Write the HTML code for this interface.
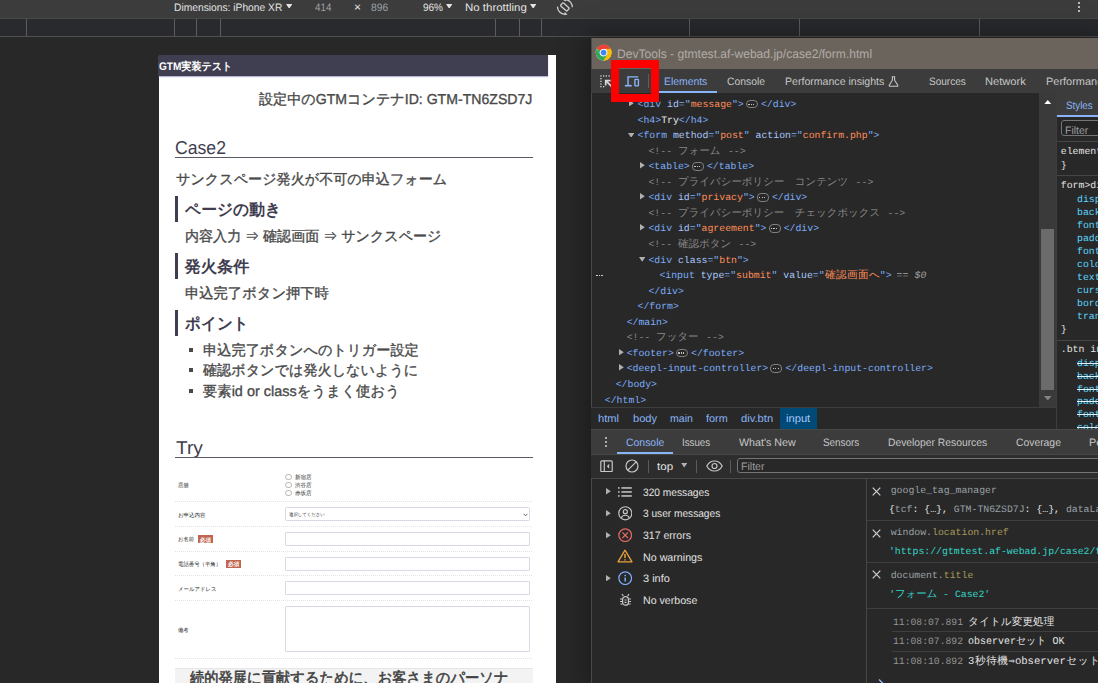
<!DOCTYPE html>
<html lang="ja"><head><meta charset="utf-8"><title>DevTools - gtmtest.af-webad.jp/case2/form.html</title>
<style>
html,body{margin:0;padding:0}
body{width:1098px;height:683px;overflow:hidden;position:relative;background:#282828;font-family:"Liberation Sans",sans-serif}
#root{position:absolute;left:0;top:0;width:1098px;height:683px;overflow:hidden;background:#282828;text-rendering:geometricPrecision}
#root div,#root svg{position:absolute;box-sizing:border-box}
#root div.t,#root div.m{white-space:pre;transform-origin:0 0}
#root div.t{font-family:"Liberation Sans",sans-serif}
#root div.m{font-family:"Liberation Mono",monospace}
</style></head><body><div id="root">
<div style="left:0px;top:0px;width:1098px;height:18px;background:#3c3c3c;"></div>
<div style="left:0px;top:18px;width:1098px;height:1px;background:#484848;"></div>
<div style="left:0px;top:19px;width:1098px;height:17px;background:#292a2d;"></div>
<div style="left:0px;top:36px;width:1098px;height:1px;background:#4f4f4f;"></div>
<div style="left:26px;top:19px;width:1px;height:17px;background:#5c5c5c;"></div>
<div style="left:174px;top:19px;width:1px;height:17px;background:#5c5c5c;"></div>
<div style="left:196px;top:19px;width:1px;height:17px;background:#5c5c5c;"></div>
<div style="left:220px;top:19px;width:1px;height:17px;background:#5c5c5c;"></div>
<div style="left:495px;top:19px;width:1px;height:17px;background:#5c5c5c;"></div>
<div style="left:519px;top:19px;width:1px;height:17px;background:#5c5c5c;"></div>
<div style="left:541px;top:19px;width:1px;height:17px;background:#5c5c5c;"></div>
<div style="left:689px;top:19px;width:1px;height:17px;background:#5c5c5c;"></div>
<div style="left:799px;top:19px;width:1px;height:17px;background:#5c5c5c;"></div>
<div style="left:979px;top:19px;width:1px;height:17px;background:#5c5c5c;"></div>
<div class="t" style="left:174.4px;top:1px;font-size:10.8px;line-height:15px;color:#e3e3e3;transform:scaleX(0.9497);">Dimensions: iPhone XR</div>
<div class="t" style="left:315px;top:1px;font-size:10.8px;line-height:15px;color:#9aa0a6;transform:scaleX(0.9159);">414</div>
<div class="t" style="left:354px;top:-1px;font-size:11.8px;line-height:16px;color:#e3e3e3;transform:scaleX(1.0159);">×</div>
<div class="t" style="left:370.5px;top:1px;font-size:10.8px;line-height:15px;color:#9aa0a6;transform:scaleX(0.9547);">896</div>
<div class="t" style="left:422.8px;top:1px;font-size:10.8px;line-height:15px;color:#e3e3e3;transform:scaleX(0.9249);">96%</div>
<div class="t" style="left:464.9px;top:1px;font-size:10.8px;line-height:15px;color:#e3e3e3;transform:scaleX(1.0615);">No throttling</div>
<svg style="left:286px;top:3.6px" width="6.4" height="4.8" viewBox="0 0 8 6"><path d="M0 0h8L4 6z" fill="#e3e3e3"/></svg>
<svg style="left:446.3px;top:3.6px" width="6.4" height="4.8" viewBox="0 0 8 6"><path d="M0 0h8L4 6z" fill="#e3e3e3"/></svg>
<svg style="left:530px;top:3.6px" width="6.4" height="4.8" viewBox="0 0 8 6"><path d="M0 0h8L4 6z" fill="#e3e3e3"/></svg>
<svg style="left:555px;top:0px" width="20" height="16" viewBox="555 0 20 16" fill="none" stroke="#d0d0d0" stroke-width="1.3"><rect x="560.6" y="4.9" width="8.6" height="4" rx="0.8" transform="rotate(40.7 564.9 6.9)"/><path d="M565.6 -0.4A7.4 7.4 0 0 1 572.3 6.6" stroke-linecap="round"/><path d="M557.5 7.2A7.4 7.4 0 0 0 564.6 14.200" stroke-linecap="round"/><path d="M566 -1.800l-.2 3.300-3-1.600z" fill="#d0d0d0" stroke="none"/><path d="M564.8 12.1l2.700 2.400-3.300.7z" fill="#d0d0d0" stroke="none"/></svg>
<div style="left:1078px;top:2px;width:2px;height:2px;background:#e3e3e3;border-radius:1px;"></div>
<div style="left:1078px;top:6px;width:2px;height:2px;background:#e3e3e3;border-radius:1px;"></div>
<div style="left:1078px;top:10px;width:2px;height:2px;background:#e3e3e3;border-radius:1px;"></div>
<div id="pg" style="left:159px;top:55px;width:397px;height:628px;background:#fff;overflow:hidden">
</div>
<div style="left:159px;top:55px;width:389px;height:21px;background:#403f51;box-shadow:0 1px 1px #b9b6d6;"></div>
<div class="t" style="left:158.6px;top:60px;font-size:11px;line-height:15px;color:#fff;font-weight:700;width:80.22px;text-align-last:justify;transform:scaleX(0.9150);">GTM実装テスト</div>
<div class="t" style="left:258.8px;top:90.8px;font-size:14.4px;line-height:19px;color:#4a4a4a;width:279.11px;text-align-last:justify;transform:scaleX(0.9795);-webkit-text-stroke:0.35px #4a4a4a;">設定中のGTMコンテナID: GTM-TN6ZSD7J</div>
<div class="t" style="left:175.4px;top:134.8px;font-size:18.6px;line-height:25px;color:#3f3e50;transform:scaleX(0.9488);">Case2</div>
<div style="left:175px;top:157.3px;width:357.5px;height:1.2px;background:#5a5966;"></div>
<div class="t" style="left:175.8px;top:171px;font-size:14.4px;line-height:19px;color:#4a4a4a;width:277.14px;text-align-last:justify;transform:scaleX(0.9786);-webkit-text-stroke:0.35px #4a4a4a;">サンクスページ発火が不可の申込フォーム</div>
<div style="left:175px;top:196px;width:3px;height:26px;background:#3f3e50;"></div>
<div class="t" style="left:184.5px;top:198.7px;font-size:16.2px;line-height:22px;color:#3f3e50;font-weight:700;width:98.66px;text-align-last:justify;transform:scaleX(0.9751);">ページの動き</div>
<div style="left:175px;top:253.2px;width:3px;height:25.7px;background:#3f3e50;"></div>
<div class="t" style="left:184.5px;top:255.7px;font-size:16.2px;line-height:22px;color:#3f3e50;font-weight:700;width:65.00px;text-align-last:justify;">発火条件</div>
<div style="left:175px;top:310px;width:3px;height:25.5px;background:#3f3e50;"></div>
<div class="t" style="left:184.5px;top:312.5px;font-size:16.2px;line-height:22px;color:#3f3e50;font-weight:700;width:66.28px;text-align-last:justify;transform:scaleX(0.9626);">ポイント</div>
<div class="t" style="left:184.5px;top:228.2px;font-size:14.4px;line-height:19px;color:#4a4a4a;width:262.67px;text-align-last:justify;transform:scaleX(0.9765);-webkit-text-stroke:0.35px #4a4a4a;">内容入力 ⇒ 確認画面 ⇒ サンクスページ</div>
<div class="t" style="left:184.5px;top:285px;font-size:14.4px;line-height:19px;color:#4a4a4a;width:144.92px;text-align-last:justify;transform:scaleX(0.9929);-webkit-text-stroke:0.35px #4a4a4a;">申込完了ボタン押下時</div>
<div style="left:189.1px;top:347.5px;width:4px;height:4px;background:#4a4a4a;"></div>
<div class="t" style="left:202.7px;top:341.7px;font-size:14.4px;line-height:19px;color:#4a4a4a;width:218.56px;text-align-last:justify;transform:scaleX(0.9874);-webkit-text-stroke:0.35px #4a4a4a;">申込完了ボタンへのトリガー設定</div>
<div style="left:189.1px;top:367.6px;width:4px;height:4px;background:#4a4a4a;"></div>
<div class="t" style="left:202.7px;top:361.8px;font-size:14.4px;line-height:19px;color:#4a4a4a;width:219.58px;text-align-last:justify;transform:scaleX(0.9805);-webkit-text-stroke:0.35px #4a4a4a;">確認ボタンでは発火しないように</div>
<div style="left:189.1px;top:388.5px;width:4px;height:4px;background:#4a4a4a;"></div>
<div class="t" style="left:202.7px;top:382.7px;font-size:14.4px;line-height:19px;color:#4a4a4a;width:197.30px;text-align-last:justify;-webkit-text-stroke:0.35px #4a4a4a;">要素id or classをうまく使おう</div>
<div class="t" style="left:175.8px;top:435.1px;font-size:18.6px;line-height:25px;color:#3f3e50;transform:scaleX(1.0278);">Try</div>
<div style="left:175px;top:456.6px;width:357.5px;height:1.4px;background:#5a5966;"></div>
<div style="left:175px;top:501px;width:357px;height:0;border-top:1px dotted #e2e2e2"></div>
<div style="left:175px;top:525.5px;width:357px;height:0;border-top:1px dotted #e2e2e2"></div>
<div style="left:175px;top:550.5px;width:357px;height:0;border-top:1px dotted #e2e2e2"></div>
<div style="left:175px;top:575px;width:357px;height:0;border-top:1px dotted #e2e2e2"></div>
<div style="left:175px;top:599.5px;width:357px;height:0;border-top:1px dotted #e2e2e2"></div>
<div style="left:175px;top:658px;width:357px;height:0;border-top:1px dotted #e2e2e2"></div>
<div class="t" style="left:178px;top:482px;font-size:5.6px;line-height:8px;color:#222;width:11.19px;text-align-last:justify;transform:scaleX(0.9385);">店舗</div>
<div style="left:285px;top:473.7px;width:6.6px;height:6.6px;border:0.7px solid #bababa;border-radius:50%;background:#fff"></div>
<div class="t" style="left:294.5px;top:474.1px;font-size:5.6px;line-height:8px;color:#222;width:16.78px;text-align-last:justify;transform:scaleX(0.9832);">新宿店</div>
<div style="left:285px;top:481.5px;width:6.6px;height:6.6px;border:0.7px solid #bababa;border-radius:50%;background:#fff"></div>
<div class="t" style="left:294.5px;top:481.9px;font-size:5.6px;line-height:8px;color:#222;width:16.78px;text-align-last:justify;transform:scaleX(0.9832);">渋谷店</div>
<div style="left:285px;top:489.5px;width:6.6px;height:6.6px;border:0.7px solid #bababa;border-radius:50%;background:#fff"></div>
<div class="t" style="left:294.5px;top:489.9px;font-size:5.6px;line-height:8px;color:#222;width:16.78px;text-align-last:justify;transform:scaleX(0.9832);">赤坂店</div>
<div class="t" style="left:178px;top:511.7px;font-size:5.6px;line-height:8px;color:#222;width:28.11px;text-align-last:justify;transform:scaleX(0.9783);">お申込内容</div>
<div style="left:285px;top:507.3px;width:244.6px;height:13.9px;border:1px solid #d9d9e6;border-radius:1.5px;background:#fff"></div>
<div class="t" style="left:289.4px;top:512.4px;font-size:4.5px;line-height:6px;color:#222;width:36.64px;text-align-last:justify;transform:scaleX(0.9771);">選択してください</div>
<svg style="left:523px;top:512.5px" width="5" height="4" viewBox="0 0 5 4"><path d="M0.6 0.8L2.5 2.8 4.4 0.8" fill="none" stroke="#444" stroke-width="0.8"/></svg>
<div class="t" style="left:178px;top:536.2px;font-size:5.6px;line-height:8px;color:#222;width:16.92px;text-align-last:justify;transform:scaleX(0.9455);">お名前</div>
<div class="t" style="left:178px;top:561px;font-size:5.6px;line-height:8px;color:#222;width:44.75px;text-align-last:justify;transform:scaleX(0.9609);">電話番号（半角）</div>
<div class="t" style="left:178px;top:585.6px;font-size:5.6px;line-height:8px;color:#222;width:39.95px;text-align-last:justify;transform:scaleX(0.9636);">メールアドレス</div>
<div class="t" style="left:178px;top:627px;font-size:5.6px;line-height:8px;color:#222;width:11.19px;text-align-last:justify;transform:scaleX(0.9385);">備考</div>
<div style="left:197.8px;top:535px;width:15.3px;height:8.3px;background:#c0654f;"></div>
<div class="t" style="left:199.8px;top:536.6px;font-size:5.6px;line-height:8px;color:#fff;font-weight:700;width:11.30px;text-align-last:justify;">必須</div>
<div style="left:226px;top:559.8px;width:15.3px;height:8.3px;background:#c0654f;"></div>
<div class="t" style="left:228px;top:561.4px;font-size:5.6px;line-height:8px;color:#fff;font-weight:700;width:11.30px;text-align-last:justify;">必須</div>
<div style="left:285px;top:532px;width:244.6px;height:13.7px;border:1px solid #d9d9e6;border-radius:1px;background:#fff"></div>
<div style="left:285px;top:557px;width:244.6px;height:13.8px;border:1px solid #d9d9e6;border-radius:1px;background:#fff"></div>
<div style="left:285px;top:581.2px;width:244.6px;height:13.7px;border:1px solid #d9d9e6;border-radius:1px;background:#fff"></div>
<div style="left:285px;top:606px;width:244.6px;height:46.3px;border:1px solid #d9d9e6;border-radius:1px;background:#fff"></div>
<div style="left:175px;top:668.4px;width:357.5px;height:20px;background:#f3f3f3;border-top:1px solid #e6e6e6;"></div>
<div class="t" style="left:190px;top:667.6px;font-size:15.4px;line-height:21px;color:#444;width:343.30px;text-align-last:justify;transform:scaleX(0.9278);-webkit-text-stroke:0.6px #444;">続的発展に貢献するために、お客さまのパーソナ</div>
<div style="left:591.3px;top:38px;width:506.70000000000005px;height:645px;background:#282828;box-shadow:0 0 26px 4px rgba(0,0,0,.35);"></div>
<div style="left:591.3px;top:38px;width:506.70000000000005px;height:31px;background:#6b645d;"></div>
<div style="left:590.8px;top:38px;width:1px;height:645px;background:#4a4a4a;"></div>
<svg style="left:595px;top:44.2px" width="17.2" height="17.2" viewBox="0 0 48 48"><circle cx="24" cy="24" r="22" fill="#fff"/><path d="M24 2a22 22 0 0 1 19.05 11H24a11 11 0 0 0-9.53 5.5L6.2 11.0A22 22 0 0 1 24 2z" fill="#ea4335"/><path d="M43.05 13A22 22 0 0 1 24 46l9.53-16.5A11 11 0 0 0 33.53 18.5L43.05 13z" fill="#fbbc04"/><path d="M43.05 13H24a11 11 0 0 1 9.53 16.5L24 46A22 22 0 0 0 43.05 13z" fill="#fbbc04"/><path d="M24 46A22 22 0 0 1 4.95 13l9.52 16.5A11 11 0 0 0 24 35l-0 0 9.53-5.5L24 46z" fill="#34a853"/><path d="M4.95 13 14.47 29.5A11 11 0 0 1 14.47 18.5z" fill="#34a853"/><path d="M4.95 13A22 22 0 0 1 43.05 13H24a11 11 0 0 0-9.53 5.5z" fill="#ea4335"/><circle cx="24" cy="24" r="10" fill="#fff"/><circle cx="24" cy="24" r="8" fill="#4285f4"/></svg>
<div class="t" style="left:617.4px;top:45.9px;font-size:12.4px;line-height:17px;color:#b0aca6;transform:scaleX(0.9748);">DevTools - gtmtest.af-webad.jp/case2/form.html</div>
<div style="left:591.3px;top:69px;width:506.70000000000005px;height:24px;background:#3c3c3c;"></div>
<svg style="left:598px;top:73px" width="16" height="16" viewBox="598 73 16 16"><g fill="#d8d8d8"><rect x="600.3" y="75.3" width="1.300" height="1.300"/><rect x="600.3" y="78.0" width="1.300" height="1.300"/><rect x="600.3" y="80.7" width="1.300" height="1.300"/><rect x="600.3" y="83.4" width="1.300" height="1.300"/><rect x="600.3" y="86.0" width="1.300" height="1.300"/><rect x="603.0" y="75.3" width="1.300" height="1.300"/><rect x="605.7" y="75.3" width="1.300" height="1.300"/><rect x="608.4" y="75.3" width="1.300" height="1.300"/><rect x="603.0" y="86.0" width="1.300" height="1.300"/></g><g fill="none" stroke="#d8d8d8" stroke-width="1.700"><path d="M606.200 81.200l6 6"/><path d="M605.700 85.600V80.700H610.600"/></g></svg>
<svg style="left:622px;top:74px" width="20" height="14" viewBox="622 74 20 14" fill="none" stroke="#8ab4f8" stroke-width="1.4"><path d="M628 85.500V76.900H638.200"/><path d="M624.900 85.700H631.700" stroke-width="1.600"/><rect x="634.900" y="79.400" width="3.500" height="6.500" rx="0.600"/></svg>
<div style="left:648px;top:74.3px;width:1px;height:13.7px;background:#5e5e5e;"></div>
<div class="t" style="left:663.8px;top:75px;font-size:10.8px;line-height:15px;color:#8ab4f8;transform:scaleX(0.9619);">Elements</div>
<div style="left:659px;top:91px;width:58px;height:2px;background:#8ab4f8;"></div>
<div class="t" style="left:727px;top:75px;font-size:10.8px;line-height:15px;color:#c7c7c7;transform:scaleX(0.9590);">Console</div>
<div class="t" style="left:784.7px;top:75px;font-size:10.8px;line-height:15px;color:#c7c7c7;transform:scaleX(0.9791);">Performance insights</div>
<svg style="left:888px;top:75.5px" width="11" height="11" viewBox="0 0 11 11" fill="none" stroke="#c7c7c7" stroke-width="1.1"><path d="M3.8 0.8h3.4M4.4 0.8v3.4L1.2 9.3a.7.7 0 0 0 .6 1h7.4a.7.7 0 0 0 .6-1L6.6 4.2V0.8"/></svg>
<div class="t" style="left:928.5px;top:75px;font-size:10.8px;line-height:15px;color:#c7c7c7;transform:scaleX(0.9291);">Sources</div>
<div class="t" style="left:985.1px;top:75px;font-size:10.8px;line-height:15px;color:#c7c7c7;transform:scaleX(1.0301);">Network</div>
<div class="t" style="left:1045.7px;top:75px;font-size:10.8px;line-height:15px;color:#c7c7c7;transform:scaleX(1.0160);">Performance</div>
<svg style="left:629px;top:100.05px" width="4.8" height="6.4" viewBox="0 0 6 8"><path d="M0 0v8l6-4z" fill="#b0b0b0"/></svg>
<div class="m" style="left:637.56px;top:98.05px;font-size:9.833px;line-height:13px;color:#7cacf8;">&lt;div</div>
<div class="m" style="left:661.16px;top:98.05px;font-size:9.833px;line-height:13px;color:#a8c7fa;"> id</div>
<div class="m" style="left:678.86px;top:98.05px;font-size:9.833px;line-height:13px;color:#7cacf8;">=&quot;</div>
<div class="m" style="left:690.66px;top:98.05px;font-size:9.833px;line-height:13px;color:#fe8d59;">message</div>
<div class="m" style="left:731.96px;top:98.05px;font-size:9.833px;line-height:13px;color:#7cacf8;">&quot;&gt;</div>
<div style="left:745.9599999999999px;top:99.75px;width:10px;height:6.6px;border:0.8px solid #808080;border-radius:4px;box-sizing:content-box"></div>
<div style="left:748.3599999999999px;top:103.55px;width:1.2px;height:1.2px;background:#c4c4c4;"></div>
<div style="left:750.7599999999999px;top:103.55px;width:1.2px;height:1.2px;background:#c4c4c4;"></div>
<div style="left:753.1599999999999px;top:103.55px;width:1.2px;height:1.2px;background:#c4c4c4;"></div>
<div class="m" style="left:760.96px;top:98.05px;font-size:9.833px;line-height:13px;color:#7cacf8;">&lt;/div&gt;</div>
<div class="m" style="left:637.56px;top:113.6px;font-size:9.833px;line-height:13px;color:#7cacf8;">&lt;h4&gt;</div>
<div class="m" style="left:661.16px;top:113.6px;font-size:9.833px;line-height:13px;color:#e8eaed;">Try</div>
<div class="m" style="left:678.86px;top:113.6px;font-size:9.833px;line-height:13px;color:#7cacf8;">&lt;/h4&gt;</div>
<svg style="left:627.7px;top:132.55px" width="6.4" height="4.8" viewBox="0 0 8 6"><path d="M0 0h8L4 6z" fill="#b0b0b0"/></svg>
<div class="m" style="left:637.56px;top:129.15px;font-size:9.833px;line-height:13px;color:#7cacf8;">&lt;form</div>
<div class="m" style="left:667.06px;top:129.15px;font-size:9.833px;line-height:13px;color:#a8c7fa;"> method</div>
<div class="m" style="left:708.36px;top:129.15px;font-size:9.833px;line-height:13px;color:#7cacf8;">=&quot;</div>
<div class="m" style="left:720.16px;top:129.15px;font-size:9.833px;line-height:13px;color:#fe8d59;">post</div>
<div class="m" style="left:743.76px;top:129.15px;font-size:9.833px;line-height:13px;color:#7cacf8;">&quot;</div>
<div class="m" style="left:749.66px;top:129.15px;font-size:9.833px;line-height:13px;color:#a8c7fa;"> action</div>
<div class="m" style="left:790.96px;top:129.15px;font-size:9.833px;line-height:13px;color:#7cacf8;">=&quot;</div>
<div class="m" style="left:802.76px;top:129.15px;font-size:9.833px;line-height:13px;color:#fe8d59;">confirm.php</div>
<div class="m" style="left:867.66px;top:129.15px;font-size:9.833px;line-height:13px;color:#7cacf8;">&quot;&gt;</div>
<div class="m" style="left:648.48px;top:144.7px;font-size:9.833px;line-height:13px;color:#898989;">&lt;!--</div>
<div class="m" style="left:677.98px;top:144.7px;font-size:10.6px;line-height:14px;color:#898989;width:43.12px;text-align-last:justify;transform:scaleX(0.9869);">フォーム</div>
<div class="m" style="left:727.94px;top:144.7px;font-size:9.833px;line-height:13px;color:#898989;">--&gt;</div>
<svg style="left:639.8px;top:162.25px" width="4.8" height="6.4" viewBox="0 0 6 8"><path d="M0 0v8l6-4z" fill="#b0b0b0"/></svg>
<div class="m" style="left:648.48px;top:160.25px;font-size:9.833px;line-height:13px;color:#7cacf8;">&lt;table&gt;</div>
<div style="left:691.9799999999999px;top:161.95px;width:10px;height:6.6px;border:0.8px solid #808080;border-radius:4px;box-sizing:content-box"></div>
<div style="left:694.3799999999999px;top:165.75px;width:1.2px;height:1.2px;background:#c4c4c4;"></div>
<div style="left:696.7799999999999px;top:165.75px;width:1.2px;height:1.2px;background:#c4c4c4;"></div>
<div style="left:699.1799999999998px;top:165.75px;width:1.2px;height:1.2px;background:#c4c4c4;"></div>
<div class="m" style="left:706.98px;top:160.25px;font-size:9.833px;line-height:13px;color:#7cacf8;">&lt;/table&gt;</div>
<div class="m" style="left:648.48px;top:175.8px;font-size:9.833px;line-height:13px;color:#898989;">&lt;!--</div>
<div class="m" style="left:677.98px;top:175.8px;font-size:10.6px;line-height:14px;color:#898989;width:172.73px;text-align-last:justify;transform:scaleX(0.9856);">プライバシーポリシー　コンテンツ</div>
<div class="m" style="left:855.62px;top:175.8px;font-size:9.833px;line-height:13px;color:#898989;">--&gt;</div>
<svg style="left:639.8px;top:193.35px" width="4.8" height="6.4" viewBox="0 0 6 8"><path d="M0 0v8l6-4z" fill="#b0b0b0"/></svg>
<div class="m" style="left:648.48px;top:191.35px;font-size:9.833px;line-height:13px;color:#7cacf8;">&lt;div</div>
<div class="m" style="left:672.08px;top:191.35px;font-size:9.833px;line-height:13px;color:#a8c7fa;"> id</div>
<div class="m" style="left:689.78px;top:191.35px;font-size:9.833px;line-height:13px;color:#7cacf8;">=&quot;</div>
<div class="m" style="left:701.58px;top:191.35px;font-size:9.833px;line-height:13px;color:#fe8d59;">privacy</div>
<div class="m" style="left:742.88px;top:191.35px;font-size:9.833px;line-height:13px;color:#7cacf8;">&quot;&gt;</div>
<div style="left:756.8799999999999px;top:193.04999999999998px;width:10px;height:6.6px;border:0.8px solid #808080;border-radius:4px;box-sizing:content-box"></div>
<div style="left:759.2799999999999px;top:196.85px;width:1.2px;height:1.2px;background:#c4c4c4;"></div>
<div style="left:761.6799999999998px;top:196.85px;width:1.2px;height:1.2px;background:#c4c4c4;"></div>
<div style="left:764.0799999999998px;top:196.85px;width:1.2px;height:1.2px;background:#c4c4c4;"></div>
<div class="m" style="left:771.88px;top:191.35px;font-size:9.833px;line-height:13px;color:#7cacf8;">&lt;/div&gt;</div>
<div class="m" style="left:648.48px;top:206.9px;font-size:9.833px;line-height:13px;color:#898989;">&lt;!--</div>
<div class="m" style="left:677.98px;top:206.9px;font-size:10.6px;line-height:14px;color:#898989;width:205.27px;text-align-last:justify;transform:scaleX(0.9849);">プライバシーポリシー　チェックボックス</div>
<div class="m" style="left:887.54px;top:206.9px;font-size:9.833px;line-height:13px;color:#898989;">--&gt;</div>
<svg style="left:639.8px;top:224.45px" width="4.8" height="6.4" viewBox="0 0 6 8"><path d="M0 0v8l6-4z" fill="#b0b0b0"/></svg>
<div class="m" style="left:648.48px;top:222.45px;font-size:9.833px;line-height:13px;color:#7cacf8;">&lt;div</div>
<div class="m" style="left:672.08px;top:222.45px;font-size:9.833px;line-height:13px;color:#a8c7fa;"> id</div>
<div class="m" style="left:689.78px;top:222.45px;font-size:9.833px;line-height:13px;color:#7cacf8;">=&quot;</div>
<div class="m" style="left:701.58px;top:222.45px;font-size:9.833px;line-height:13px;color:#fe8d59;">agreement</div>
<div class="m" style="left:754.68px;top:222.45px;font-size:9.833px;line-height:13px;color:#7cacf8;">&quot;&gt;</div>
<div style="left:768.68px;top:224.14999999999998px;width:10px;height:6.6px;border:0.8px solid #808080;border-radius:4px;box-sizing:content-box"></div>
<div style="left:771.0799999999999px;top:227.95px;width:1.2px;height:1.2px;background:#c4c4c4;"></div>
<div style="left:773.4799999999999px;top:227.95px;width:1.2px;height:1.2px;background:#c4c4c4;"></div>
<div style="left:775.8799999999999px;top:227.95px;width:1.2px;height:1.2px;background:#c4c4c4;"></div>
<div class="m" style="left:783.68px;top:222.45px;font-size:9.833px;line-height:13px;color:#7cacf8;">&lt;/div&gt;</div>
<div class="m" style="left:648.48px;top:238.0px;font-size:9.833px;line-height:13px;color:#898989;">&lt;!--</div>
<div class="m" style="left:677.98px;top:238.0px;font-size:10.6px;line-height:14px;color:#898989;width:53.72px;text-align-last:justify;transform:scaleX(0.9903);">確認ボタン</div>
<div class="m" style="left:738.58px;top:238.0px;font-size:9.833px;line-height:13px;color:#898989;">--&gt;</div>
<svg style="left:638.7px;top:256.95px" width="6.4" height="4.8" viewBox="0 0 8 6"><path d="M0 0h8L4 6z" fill="#b0b0b0"/></svg>
<div class="m" style="left:648.48px;top:253.55px;font-size:9.833px;line-height:13px;color:#7cacf8;">&lt;div</div>
<div class="m" style="left:672.08px;top:253.55px;font-size:9.833px;line-height:13px;color:#a8c7fa;"> class</div>
<div class="m" style="left:707.48px;top:253.55px;font-size:9.833px;line-height:13px;color:#7cacf8;">=&quot;</div>
<div class="m" style="left:719.28px;top:253.55px;font-size:9.833px;line-height:13px;color:#fe8d59;">btn</div>
<div class="m" style="left:736.98px;top:253.55px;font-size:9.833px;line-height:13px;color:#7cacf8;">&quot;&gt;</div>
<div style="left:596.2px;top:274.90000000000003px;width:1.4px;height:1.4px;background:#d0d0d0;"></div>
<div style="left:598.8000000000001px;top:274.90000000000003px;width:1.4px;height:1.4px;background:#d0d0d0;"></div>
<div style="left:601.4000000000001px;top:274.90000000000003px;width:1.4px;height:1.4px;background:#d0d0d0;"></div>
<div class="m" style="left:659.4px;top:269.1px;font-size:9.833px;line-height:13px;color:#7cacf8;">&lt;input</div>
<div class="m" style="left:694.8px;top:269.1px;font-size:9.833px;line-height:13px;color:#a8c7fa;"> type</div>
<div class="m" style="left:724.3px;top:269.1px;font-size:9.833px;line-height:13px;color:#7cacf8;">=&quot;</div>
<div class="m" style="left:736.1px;top:269.1px;font-size:9.833px;line-height:13px;color:#fe8d59;">submit</div>
<div class="m" style="left:771.5px;top:269.1px;font-size:9.833px;line-height:13px;color:#7cacf8;">&quot;</div>
<div class="m" style="left:777.4px;top:269.1px;font-size:9.833px;line-height:13px;color:#a8c7fa;"> value</div>
<div class="m" style="left:812.8px;top:269.1px;font-size:9.833px;line-height:13px;color:#7cacf8;">=&quot;</div>
<div class="m" style="left:825.0px;top:269.1px;font-size:10.6px;line-height:14px;color:#fe8d59;width:54.80px;text-align-last:justify;">確認画面へ</div>
<div class="m" style="left:879.8px;top:269.1px;font-size:9.833px;line-height:13px;color:#7cacf8;">&quot;&gt;</div>
<div class="m" style="left:896.6px;top:269.1px;font-size:9.833px;line-height:13px;color:#a0a0a0;font-style:italic;">==</div>
<div class="m" style="left:914.5px;top:269.1px;font-size:9.833px;line-height:13px;color:#a0a0a0;font-style:italic;">$0</div>
<div class="m" style="left:648.48px;top:284.65px;font-size:9.833px;line-height:13px;color:#7cacf8;">&lt;/div&gt;</div>
<div class="m" style="left:637.56px;top:300.2px;font-size:9.833px;line-height:13px;color:#7cacf8;">&lt;/form&gt;</div>
<div class="m" style="left:626.64px;top:315.75px;font-size:9.833px;line-height:13px;color:#7cacf8;">&lt;/main&gt;</div>
<div class="m" style="left:626.64px;top:331.3px;font-size:9.833px;line-height:13px;color:#898989;">&lt;!--</div>
<div class="m" style="left:656.14px;top:331.3px;font-size:10.6px;line-height:14px;color:#898989;width:43.12px;text-align-last:justify;transform:scaleX(0.9869);">フッター</div>
<div class="m" style="left:706.1px;top:331.3px;font-size:9.833px;line-height:13px;color:#898989;">--&gt;</div>
<svg style="left:619px;top:348.85px" width="4.8" height="6.4" viewBox="0 0 6 8"><path d="M0 0v8l6-4z" fill="#b0b0b0"/></svg>
<div class="m" style="left:626.64px;top:346.85px;font-size:9.833px;line-height:13px;color:#7cacf8;">&lt;footer&gt;</div>
<div style="left:676.0400000000001px;top:348.55px;width:10px;height:6.6px;border:0.8px solid #808080;border-radius:4px;box-sizing:content-box"></div>
<div style="left:678.44px;top:352.35px;width:1.2px;height:1.2px;background:#c4c4c4;"></div>
<div style="left:680.84px;top:352.35px;width:1.2px;height:1.2px;background:#c4c4c4;"></div>
<div style="left:683.24px;top:352.35px;width:1.2px;height:1.2px;background:#c4c4c4;"></div>
<div class="m" style="left:691.04px;top:346.85px;font-size:9.833px;line-height:13px;color:#7cacf8;">&lt;/footer&gt;</div>
<svg style="left:619px;top:364.4px" width="4.8" height="6.4" viewBox="0 0 6 8"><path d="M0 0v8l6-4z" fill="#b0b0b0"/></svg>
<div class="m" style="left:626.64px;top:362.4px;font-size:9.833px;line-height:13px;color:#7cacf8;">&lt;deepl-input-controller&gt;</div>
<div style="left:770.44px;top:364.09999999999997px;width:10px;height:6.6px;border:0.8px solid #808080;border-radius:4px;box-sizing:content-box"></div>
<div style="left:772.84px;top:367.9px;width:1.2px;height:1.2px;background:#c4c4c4;"></div>
<div style="left:775.24px;top:367.9px;width:1.2px;height:1.2px;background:#c4c4c4;"></div>
<div style="left:777.64px;top:367.9px;width:1.2px;height:1.2px;background:#c4c4c4;"></div>
<div class="m" style="left:785.44px;top:362.4px;font-size:9.833px;line-height:13px;color:#7cacf8;">&lt;/deepl-input-controller&gt;</div>
<div class="m" style="left:615.72px;top:377.95px;font-size:9.833px;line-height:13px;color:#7cacf8;">&lt;/body&gt;</div>
<div class="m" style="left:604.8px;top:393.5px;font-size:9.833px;line-height:13px;color:#7cacf8;">&lt;/html&gt;</div>
<div style="left:1039px;top:93px;width:17px;height:314px;background:#3a3a3a;"></div>
<div style="left:1041.3px;top:229px;width:12.8px;height:161px;background:#6b6b6b;"></div>
<svg style="left:1043.6px;top:100px" width="7.6" height="4.4" viewBox="0 0 8 4.6"><path d="M0 4.6h8L4 0z" fill="#fff"/></svg>
<svg style="left:1043.6px;top:396px" width="7.6" height="4.4" viewBox="0 0 8 4.6"><path d="M0 0h8L4 4.6z" fill="#858585"/></svg>
<div style="left:1056px;top:93px;width:1px;height:336px;background:#3d3d3d;"></div>
<div style="left:1057px;top:93px;width:41px;height:22px;background:#3c3c3c;"></div>
<div class="t" style="left:1066.1px;top:99.2px;font-size:10.8px;line-height:15px;color:#8ab4f8;transform:scaleX(0.9080);">Styles</div>
<div style="left:1057px;top:115px;width:41px;height:2px;background:#8ab4f8;"></div>
<div style="left:1060.5px;top:120.2px;width:50px;height:15.6px;border:1px solid #757575;border-radius:3px;background:#242424"></div>
<div class="t" style="left:1064.7px;top:123.8px;font-size:10.8px;line-height:15px;color:#9e9e9e;transform:scaleX(0.9708);">Filter</div>
<div style="left:1057px;top:140.5px;width:41px;height:1px;background:#454545;"></div>
<div class="m" style="left:1060.8px;top:144.6px;font-size:9.833px;line-height:13px;color:#e3e3e3;">element.style {</div>
<div class="m" style="left:1060.8px;top:159.2px;font-size:9.833px;line-height:13px;color:#e3e3e3;">}</div>
<div style="left:1057px;top:174.5px;width:41px;height:1px;background:#454545;"></div>
<div class="m" style="left:1060.8px;top:178.9px;font-size:9.833px;line-height:13px;color:#e3e3e3;">form&gt;div.btn input {</div>
<div class="m" style="left:1077px;top:193.3px;font-size:9.833px;line-height:13px;color:#5cd5fb;">display</div>
<div class="m" style="left:1077px;top:206.3px;font-size:9.833px;line-height:13px;color:#5cd5fb;">background</div>
<div class="m" style="left:1077px;top:219.3px;font-size:9.833px;line-height:13px;color:#5cd5fb;">font-size</div>
<div class="m" style="left:1077px;top:232.3px;font-size:9.833px;line-height:13px;color:#5cd5fb;">padding</div>
<div class="m" style="left:1077px;top:245.3px;font-size:9.833px;line-height:13px;color:#5cd5fb;">font-weight</div>
<div class="m" style="left:1077px;top:258.3px;font-size:9.833px;line-height:13px;color:#5cd5fb;">color</div>
<div class="m" style="left:1077px;top:271.3px;font-size:9.833px;line-height:13px;color:#5cd5fb;">text-align</div>
<div class="m" style="left:1077px;top:284.3px;font-size:9.833px;line-height:13px;color:#5cd5fb;">cursor</div>
<div class="m" style="left:1077px;top:297.3px;font-size:9.833px;line-height:13px;color:#5cd5fb;">border</div>
<div class="m" style="left:1077px;top:310.3px;font-size:9.833px;line-height:13px;color:#5cd5fb;">transition</div>
<div class="m" style="left:1060.8px;top:323.0px;font-size:9.833px;line-height:13px;color:#e3e3e3;">}</div>
<div style="left:1057px;top:340.3px;width:41px;height:1px;background:#454545;"></div>
<div class="m" style="left:1060.8px;top:342.8px;font-size:9.833px;line-height:13px;color:#e3e3e3;">.btn input {</div>
<div class="m" style="left:1077px;top:357.2px;font-size:9.833px;line-height:13px;color:#5cd5fb;">display</div>
<div style="left:1077px;top:363.0px;width:25px;height:1px;background:#e0f4fb;"></div>
<div class="m" style="left:1077px;top:369.96px;font-size:9.833px;line-height:13px;color:#5cd5fb;">background</div>
<div style="left:1077px;top:375.76px;width:25px;height:1px;background:#e0f4fb;"></div>
<div class="m" style="left:1077px;top:382.72px;font-size:9.833px;line-height:13px;color:#5cd5fb;">font-size</div>
<div style="left:1077px;top:388.52000000000004px;width:25px;height:1px;background:#e0f4fb;"></div>
<div class="m" style="left:1077px;top:395.48px;font-size:9.833px;line-height:13px;color:#5cd5fb;">padding</div>
<div style="left:1077px;top:401.28000000000003px;width:25px;height:1px;background:#e0f4fb;"></div>
<div class="m" style="left:1077px;top:408.24px;font-size:9.833px;line-height:13px;color:#5cd5fb;">font-weight</div>
<div style="left:1077px;top:414.04px;width:25px;height:1px;background:#e0f4fb;"></div>
<div class="m" style="left:1077px;top:421.0px;font-size:9.833px;line-height:13px;color:#5cd5fb;">color</div>
<div style="left:1077px;top:426.8px;width:25px;height:1px;background:#e0f4fb;"></div>
<div style="left:591.3px;top:407px;width:464.70000000000005px;height:1px;background:#3d3d3d;"></div>
<div style="left:591.3px;top:408px;width:464.70000000000005px;height:21px;background:#282828;"></div>
<div style="left:780px;top:408px;width:37px;height:21px;background:#004a77;"></div>
<div class="t" style="left:598.2px;top:411.8px;font-size:10.8px;line-height:15px;color:#8ab4f8;transform:scaleX(1.0340);">html</div>
<div class="t" style="left:632.8px;top:411.8px;font-size:10.8px;line-height:15px;color:#8ab4f8;transform:scaleX(1.0247);">body</div>
<div class="t" style="left:669.6px;top:411.8px;font-size:10.8px;line-height:15px;color:#8ab4f8;transform:scaleX(0.9784);">main</div>
<div class="t" style="left:706px;top:411.8px;font-size:10.8px;line-height:15px;color:#8ab4f8;transform:scaleX(1.0042);">form</div>
<div class="t" style="left:741px;top:411.8px;font-size:10.8px;line-height:15px;color:#8ab4f8;transform:scaleX(1.0350);">div.btn</div>
<div class="t" style="left:786.4px;top:411.8px;font-size:10.8px;line-height:15px;color:#a8c7fa;transform:scaleX(1.0332);">input</div>
<div style="left:591.3px;top:429px;width:506.70000000000005px;height:25.6px;background:#3c3c3c;"></div>
<div style="left:591.3px;top:453.6px;width:506.70000000000005px;height:1px;background:#474747;"></div>
<div style="left:591.3px;top:428.5px;width:506.70000000000005px;height:1px;background:#484848;"></div>
<div style="left:604.9px;top:437.3px;width:2px;height:2px;background:#d0d0d0;border-radius:1px;"></div>
<div style="left:604.9px;top:441.3px;width:2px;height:2px;background:#d0d0d0;border-radius:1px;"></div>
<div style="left:604.9px;top:445.3px;width:2px;height:2px;background:#d0d0d0;border-radius:1px;"></div>
<div class="t" style="left:625.7px;top:436px;font-size:10.8px;line-height:15px;color:#8ab4f8;transform:scaleX(0.9666);">Console</div>
<div style="left:616.8px;top:451.8px;width:56px;height:2.2px;background:#8ab4f8;"></div>
<div class="t" style="left:681.8px;top:436px;font-size:10.8px;line-height:15px;color:#c7c7c7;transform:scaleX(0.9001);">Issues</div>
<div class="t" style="left:738.7px;top:436px;font-size:10.8px;line-height:15px;color:#c7c7c7;transform:scaleX(0.9884);">What&#x27;s New</div>
<div class="t" style="left:823.4px;top:436px;font-size:10.8px;line-height:15px;color:#c7c7c7;transform:scaleX(0.9139);">Sensors</div>
<div class="t" style="left:888px;top:436px;font-size:10.8px;line-height:15px;color:#c7c7c7;transform:scaleX(0.9545);">Developer Resources</div>
<div class="t" style="left:1015.6px;top:436px;font-size:10.8px;line-height:15px;color:#c7c7c7;transform:scaleX(0.9588);">Coverage</div>
<div class="t" style="left:1088.8px;top:436px;font-size:10.8px;line-height:15px;color:#c7c7c7;transform:scaleX(1.0038);">Performance monitor</div>
<div style="left:591.3px;top:454.6px;width:506.70000000000005px;height:23.4px;background:#2d2d2d;"></div>
<div style="left:591.3px;top:477.5px;width:506.70000000000005px;height:1px;background:#484848;"></div>
<svg style="left:599.5px;top:459.5px" width="13" height="12.5" viewBox="0 0 13 12.5" fill="none" stroke="#c7c7c7" stroke-width="1.2"><rect x="0.8" y="0.8" width="11.4" height="10.9" rx="1"/><path d="M4.3 0.8v10.9"/><path d="M9.2 3.8L6.8 6.25l2.4 2.45z" fill="#c7c7c7" stroke="none"/></svg>
<svg style="left:624.7px;top:459.2px" width="14" height="14" viewBox="0 0 14 14" fill="none" stroke="#c7c7c7" stroke-width="1.2"><circle cx="7" cy="7" r="6"/><path d="M2.8 11.2l8.4-8.4"/></svg>
<div style="left:648.3px;top:459.5px;width:1px;height:13px;background:#5a5a5a;"></div>
<div class="t" style="left:656.8px;top:460.2px;font-size:10.8px;line-height:15px;color:#e3e3e3;transform:scaleX(1.0722);">top</div>
<svg style="left:681px;top:463.3px" width="6.4" height="4.6" viewBox="0 0 8 6"><path d="M0 0h8L4 6z" fill="#b0b0b0"/></svg>
<div style="left:696.2px;top:459.5px;width:1px;height:13px;background:#5a5a5a;"></div>
<svg style="left:705.5px;top:460px" width="17" height="12" viewBox="0 0 17 12" fill="none" stroke="#c7c7c7" stroke-width="1.2"><path d="M0.8 6C2.6 2.6 5.4 1 8.5 1s5.9 1.6 7.7 5c-1.8 3.4-4.6 5-7.7 5S2.6 9.400.8 6z"/><circle cx="8.500" cy="6" r="2.5"/></svg>
<div style="left:730px;top:459.5px;width:1px;height:13px;background:#5a5a5a;"></div>
<div style="left:737.4px;top:457.5px;width:380px;height:15.2px;border:1px solid #757575;border-radius:3px;background:#282828"></div>
<div class="t" style="left:741px;top:460px;font-size:10.8px;line-height:15px;color:#9e9e9e;transform:scaleX(0.9792);">Filter</div>
<div style="left:866px;top:478px;width:1px;height:205px;background:#454545;"></div>
<div class="t" style="left:642.8px;top:485.7px;font-size:10.8px;line-height:15px;color:#e3e3e3;transform:scaleX(0.9440);">320 messages</div>
<svg style="left:605.8px;top:488.3px" width="4.8" height="6.4" viewBox="0 0 6 8"><path d="M0 0v8l6-4z" fill="#b0b0b0"/></svg>
<div class="t" style="left:642.8px;top:507.32px;font-size:10.8px;line-height:15px;color:#e3e3e3;transform:scaleX(0.9390);">3 user messages</div>
<svg style="left:605.8px;top:509.9200000000001px" width="4.8" height="6.4" viewBox="0 0 6 8"><path d="M0 0v8l6-4z" fill="#b0b0b0"/></svg>
<div class="t" style="left:642.8px;top:528.94px;font-size:10.8px;line-height:15px;color:#e3e3e3;transform:scaleX(0.9732);">317 errors</div>
<svg style="left:605.8px;top:531.5400000000001px" width="4.8" height="6.4" viewBox="0 0 6 8"><path d="M0 0v8l6-4z" fill="#b0b0b0"/></svg>
<div class="t" style="left:642.8px;top:550.56px;font-size:10.8px;line-height:15px;color:#e3e3e3;transform:scaleX(0.9897);">No warnings</div>
<div class="t" style="left:642.8px;top:572.18px;font-size:10.8px;line-height:15px;color:#e3e3e3;transform:scaleX(1.0143);">3 info</div>
<svg style="left:605.8px;top:574.78px" width="4.8" height="6.4" viewBox="0 0 6 8"><path d="M0 0v8l6-4z" fill="#b0b0b0"/></svg>
<div class="t" style="left:642.8px;top:593.8px;font-size:10.8px;line-height:15px;color:#e3e3e3;transform:scaleX(0.9834);">No verbose</div>
<svg style="left:617.5px;top:485.5px" width="14" height="12" viewBox="0 0 14 12" fill="#c7c7c7"><rect x="0" y="1.2" width="1.6" height="1.5"/><rect x="3.4" y="1.2" width="10.4" height="1.5"/><rect x="0" y="5.2" width="1.6" height="1.5"/><rect x="3.4" y="5.2" width="10.4" height="1.5"/><rect x="0" y="9.2" width="1.6" height="1.5"/><rect x="3.4" y="9.2" width="10.4" height="1.5"/></svg>
<svg style="left:617.5px;top:506.40000000000003px" width="14.6" height="14.6" viewBox="0 0 15 15" fill="none" stroke="#c7c7c7" stroke-width="1.2"><circle cx="7.500" cy="7.500" r="6.700"/><circle cx="7.500" cy="5.800" r="2.100"/><path d="M3.200 12.200c1-2 2.500-2.700 4.300-2.700s3.300.7 4.300 2.700"/></svg>
<svg style="left:617.8px;top:527.8px" width="14.4" height="14.400" viewBox="0 0 15 15" fill="none" stroke="#e46962" stroke-width="1.300"><circle cx="7.500" cy="7.500" r="6.600"/><path d="M4.600 4.600l5.800 5.800M10.400 4.600l-5.800 5.800"/></svg>
<svg style="left:617px;top:549.3px" width="16" height="14" viewBox="0 0 16 14" fill="none" stroke="#e9a13b" stroke-width="1.300" stroke-linejoin="round"><path d="M8 1.200L15 12.800H1z"/><path d="M8 5v4M8 10.200v1.400" stroke-width="1.500"/></svg>
<svg style="left:617.800px;top:571.0px" width="14.400" height="14.400" viewBox="0 0 15 15" fill="none" stroke="#7cacf8" stroke-width="1.300"><circle cx="7.500" cy="7.500" r="6.600"/><path d="M7.500 6.700v4.200M7.500 4v1.500" stroke-width="1.600"/></svg>
<svg style="left:618.500px;top:593px" width="13" height="14" viewBox="0 0 13 14" fill="none" stroke="#c7c7c7" stroke-width="1.200"><rect x="3.600" y="3.600" width="5.800" height="8.600" rx="2.800"/><path d="M4.300 2.800L3 1.200M8.700 2.800L10 1.200M3.600 6H1M3.600 8.500H1M3.600 11H1.400M9.400 6H12M9.400 8.500H12M9.400 11h2.200M5.500 7h2M5.500 9.300h2"/></svg>
<div style="left:867px;top:519.9px;width:231px;height:1px;background:#3f3f3f;"></div>
<div style="left:867px;top:561.7px;width:231px;height:1px;background:#3f3f3f;"></div>
<div style="left:867px;top:608.3px;width:231px;height:1px;background:#3f3f3f;"></div>
<div style="left:892px;top:630.9px;width:206px;height:1px;background:#3f3f3f;"></div>
<div style="left:892px;top:651.2px;width:206px;height:1px;background:#3f3f3f;"></div>
<svg style="left:871.500px;top:486.5px" width="9" height="9" viewBox="0 0 9 9" fill="none" stroke="#d0d0d0" stroke-width="1.200"><path d="M0.700 0.700l7.600 7.600M8.300 0.700L0.700 8.300"/></svg>
<svg style="left:871.500px;top:528.9px" width="9" height="9" viewBox="0 0 9 9" fill="none" stroke="#d0d0d0" stroke-width="1.200"><path d="M0.700 0.700l7.600 7.600M8.300 0.700L0.700 8.300"/></svg>
<svg style="left:871.500px;top:570.3px" width="9" height="9" viewBox="0 0 9 9" fill="none" stroke="#d0d0d0" stroke-width="1.200"><path d="M0.700 0.700l7.600 7.600M8.300 0.700L0.700 8.300"/></svg>
<div class="m" style="left:890.7px;top:483.8px;font-size:9.833px;line-height:13px;color:#9aa0a6;">google_tag_manager</div>
<div class="m" style="left:888.9px;top:503px;font-size:9.833px;line-height:13px;color:#e3e3e3;">{</div>
<div class="m" style="left:894.8px;top:503px;font-size:9.833px;line-height:13px;color:#9aa0a6;">tcf</div>
<div class="m" style="left:912.5px;top:503px;font-size:9.833px;line-height:13px;color:#e3e3e3;">: {…}, </div>
<div class="m" style="left:953.8px;top:503px;font-size:9.833px;line-height:13px;color:#9aa0a6;">GTM-TN6ZSD7J</div>
<div class="m" style="left:1024.6px;top:503px;font-size:9.833px;line-height:13px;color:#e3e3e3;">: {…}, </div>
<div class="m" style="left:1065.9px;top:503px;font-size:9.833px;line-height:13px;color:#9aa0a6;">dataLayer</div>
<div class="m" style="left:1119.0px;top:503px;font-size:9.833px;line-height:13px;color:#e3e3e3;">: {…}}</div>
<div class="m" style="left:890.7px;top:526.2px;font-size:9.833px;line-height:13px;color:#9aa0a6;">window.</div>
<div class="m" style="left:932.0px;top:526.2px;font-size:9.833px;line-height:13px;color:#a7995a;">location</div>
<div class="m" style="left:979.2px;top:526.2px;font-size:9.833px;line-height:13px;color:#9aa0a6;">.</div>
<div class="m" style="left:985.1px;top:526.2px;font-size:9.833px;line-height:13px;color:#a7995a;">href</div>
<div class="m" style="left:888.9px;top:544.8px;font-size:9.833px;line-height:13px;color:#35d4c7;">&#x27;https:</div>
<div class="m" style="left:930.2px;top:544.8px;font-size:9.833px;line-height:13px;color:#35d4c7;">//gtmtest.af-webad.jp/case2/form.html&#x27;</div>
<div class="m" style="left:890.7px;top:568.6px;font-size:9.833px;line-height:13px;color:#9aa0a6;">document.</div>
<div class="m" style="left:943.8px;top:568.6px;font-size:9.833px;line-height:13px;color:#a7995a;">title</div>
<div class="m" style="left:889.3px;top:588px;font-size:9.833px;line-height:13px;color:#35d4c7;">&#x27;</div>
<div class="m" style="left:895.2px;top:588px;font-size:10.6px;line-height:14px;color:#35d4c7;width:43.12px;text-align-last:justify;transform:scaleX(0.9832);">フォーム</div>
<div class="m" style="left:937.2px;top:588px;font-size:9.833px;line-height:13px;color:#35d4c7;"> - Case2&#x27;</div>
<div class="m" style="left:892.9px;top:615.5px;font-size:9.833px;line-height:13px;color:#949494;transform:scaleX(0.9890);">11:08:07.891</div>
<div class="m" style="left:968.1px;top:615.5px;font-size:10.6px;line-height:14px;color:#e3e3e3;width:86.30px;text-align-last:justify;">タイトル変更処理</div>
<div class="m" style="left:892.9px;top:634.9px;font-size:9.833px;line-height:13px;color:#949494;transform:scaleX(0.9890);">11:08:07.892</div>
<div class="m" style="left:968.1px;top:634.9px;font-size:10.6px;line-height:14px;color:#e3e3e3;width:102.47px;text-align-last:justify;transform:scaleX(0.9418);">observerセット OK</div>
<div class="m" style="left:892.9px;top:655.1px;font-size:9.833px;line-height:13px;color:#949494;transform:scaleX(0.9890);">11:08:10.892</div>
<div class="m" style="left:968.1px;top:655.1px;font-size:10.6px;line-height:14px;color:#e3e3e3;width:131.90px;text-align-last:justify;">3秒待機⇒observerセット</div>
<svg style="left:877.5px;top:678.5px" width="6" height="9" viewBox="0 0 6 9" fill="none" stroke="#8ab4f8" stroke-width="1.400"><path d="M1 0.500l4 4-4 4"/></svg>
<div style="left:611px;top:60px;width:32px;height:26px;border:8px solid #fe0000;box-sizing:content-box"></div>
</div></body></html>
